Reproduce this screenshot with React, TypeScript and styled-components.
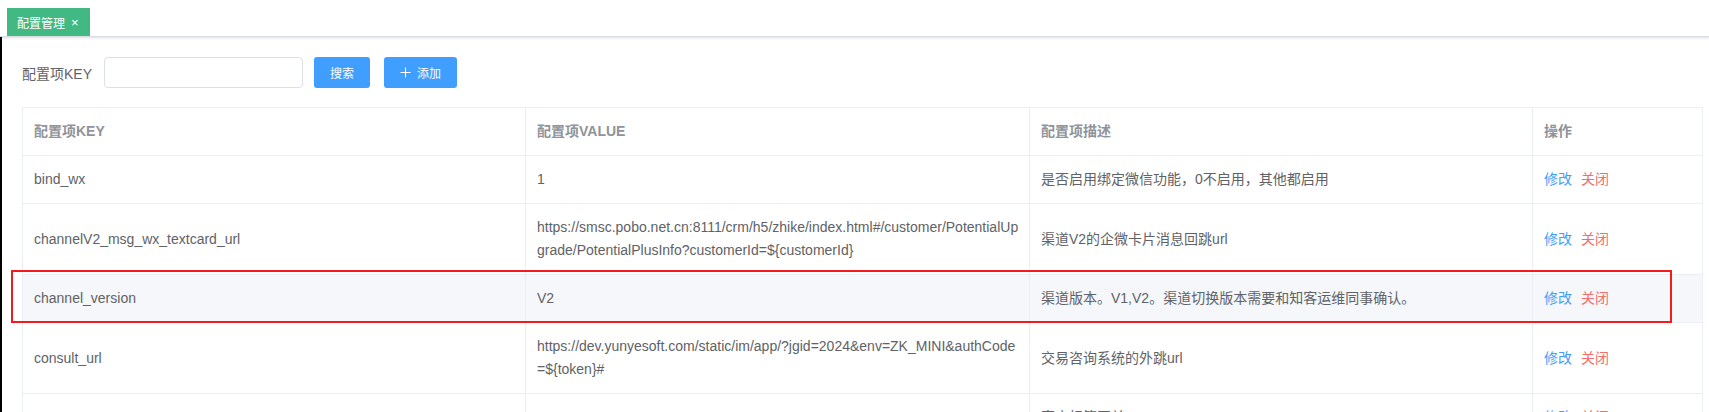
import { FC } from "react";
import styled, { createGlobalStyle } from "styled-components";

const GlobalStyle = createGlobalStyle`
    html, body {
        margin: 0;
        padding: 0;
        background: #fff;
    }
    body {
        font-family: "Liberation Sans", Arial, "Noto Sans CJK SC", sans-serif;
        font-size: 14px;
        color: #606266;
    }
`;

const Page = styled.div`
    width: 1709px;
    min-height: 412px;
    overflow: hidden;
`;

const TabBar = styled.div`
    height: 37px;
    box-sizing: border-box;
    padding: 9px 0 0 7px;
    border-bottom: 1px solid #d8dce5;
    box-shadow: 0 1px 3px 0 rgba(0, 0, 0, 0.12), 0 0 3px 0 rgba(0, 0, 0, 0.04);
    display: flex;
    align-items: flex-end;
`;

const Tab = styled.div`
    height: 28px;
    width: 83px;
    box-sizing: border-box;
    padding: 0 0 0 10px;
    background: #42b983;
    color: #fff;
    font-size: 12px;
    display: flex;
    align-items: center;
    gap: 6px;
`;

const TabClose = styled.span`
    font-size: 13px;
    line-height: 1;
`;

const Main = styled.div`
    display: flex;
    flex-direction: row;
`;

const Edge = styled.div`
    width: 2px;
    background: #000;
    flex-shrink: 0;
`;

const Content = styled.div`
    flex: 1;
    padding: 20px 7px 0 20px;
`;

const SearchForm = styled.div`
    display: flex;
    flex-direction: row;
    align-items: center;
    height: 31px;
`;

const Label = styled.label`
    font-size: 14px;
    color: #606266;
    padding-right: 12px;
    width: 70px;
`;

const Input = styled.input`
    width: 199px;
    height: 31px;
    box-sizing: border-box;
    border: 1px solid #dcdfe6;
    border-radius: 4px;
    outline: none;
    padding: 0 12px;
    font-size: 12px;
    color: #606266;
`;

interface ButtonProps {
    $width: number;
    $gap: number;
}

const Button = styled.button<ButtonProps>`
    width: ${props => props.$width}px;
    height: 31px;
    margin-left: ${props => props.$gap}px;
    border: none;
    outline: none;
    border-radius: 3px;
    background: #409eff;
    color: #fff;
    font-size: 12px;
    font-family: inherit;
    display: flex;
    align-items: center;
    justify-content: center;
    gap: 6px;
    cursor: pointer;
    padding: 0;
`;

const TableWrap = styled.div`
    position: relative;
    margin-top: 19px;
`;

const Table = styled.table`
    width: 1680px;
    border-collapse: collapse;
    table-layout: fixed;
`;

const HeadCell = styled.th`
    border: 1px solid #ebeef5;
    padding: 12px 6px 12px 11px;
    line-height: 23px;
    font-size: 14px;
    font-weight: bold;
    color: #909399;
    text-align: left;
    vertical-align: middle;
`;

interface RowProps {
    $active?: boolean;
}

const Row = styled.tr<RowProps>`
    background: ${props => props.$active ? '#f5f7fa' : '#fff'};
`;

const Cell = styled.td`
    border: 1px solid #ebeef5;
    padding: 12px 6px 12px 11px;
    line-height: 23px;
    font-size: 14px;
    color: #606266;
    vertical-align: middle;
    word-break: break-all;
`;

interface LinkProps {
    $danger?: boolean;
}

const ActionLink = styled.span<LinkProps>`
    color: ${props => props.$danger ? '#f56c6c' : '#409eff'};
    margin-right: 9px;
    cursor: pointer;
`;

// red frame drawn around the selected row
const RowMarker = styled.div`
    position: absolute;
    left: -11px;
    top: 163px;
    width: 1661px;
    height: 53px;
    box-sizing: border-box;
    border: 2px solid #f31b1b;
    pointer-events: none;
`;

const PlusIcon = () => (
    <svg width="11" height="11" viewBox="0 0 11 11">
        <path d="M5.5 0.5v10M0.5 5.5h10" stroke="#fff" strokeWidth="1.1" fill="none" />
    </svg>
);

interface ConfigItem {
    key: string;
    value: string;
    desc: string;
}

const items: ConfigItem[] = [
    { key: 'bind_wx', value: '1', desc: '是否启用绑定微信功能，0不启用，其他都启用' },
    {
        key: 'channelV2_msg_wx_textcard_url',
        value: 'https://smsc.pobo.net.cn:8111/crm/h5/zhike/index.html#/customer/PotentialUpgrade/PotentialPlusInfo?customerId=${customerId}',
        desc: '渠道V2的企微卡片消息回跳url',
    },
    { key: 'channel_version', value: 'V2', desc: '渠道版本。V1,V2。渠道切换版本需要和知客运维同事确认。' },
    {
        key: 'consult_url',
        value: 'https://dev.yunyesoft.com/static/im/app/?jgid=2024&env=ZK_MINI&authCode=${token}#',
        desc: '交易咨询系统的外跳url',
    },
    { key: 'customer_tag', value: '1', desc: '客户标签开关' },
];

const App: FC = () => (
    <Page>
        <GlobalStyle />
        <TabBar>
            <Tab>
                配置管理
                <TabClose>×</TabClose>
            </Tab>
        </TabBar>
        <Main>
            <Edge />
            <Content>
                <SearchForm>
                    <Label>配置项KEY</Label>
                    <Input />
                    <Button $width={56} $gap={11}>搜索</Button>
                    <Button $width={73} $gap={14}>
                        <PlusIcon />
                        添加
                    </Button>
                </SearchForm>
                <TableWrap>
                    <Table>
                        <colgroup>
                            <col style={{ width: 503 }} />
                            <col style={{ width: 504 }} />
                            <col style={{ width: 503 }} />
                            <col style={{ width: 170 }} />
                        </colgroup>
                        <thead>
                            <tr>
                                <HeadCell>配置项KEY</HeadCell>
                                <HeadCell>配置项VALUE</HeadCell>
                                <HeadCell>配置项描述</HeadCell>
                                <HeadCell>操作</HeadCell>
                            </tr>
                        </thead>
                        <tbody>
                            {items.map((item, i) => (
                                <Row key={item.key} $active={i === 2}>
                                    <Cell>{item.key}</Cell>
                                    <Cell>{item.value}</Cell>
                                    <Cell>{item.desc}</Cell>
                                    <Cell>
                                        <ActionLink>修改</ActionLink>
                                        <ActionLink $danger>关闭</ActionLink>
                                    </Cell>
                                </Row>
                            ))}
                        </tbody>
                    </Table>
                    <RowMarker />
                </TableWrap>
            </Content>
        </Main>
    </Page>
);

export default App;
